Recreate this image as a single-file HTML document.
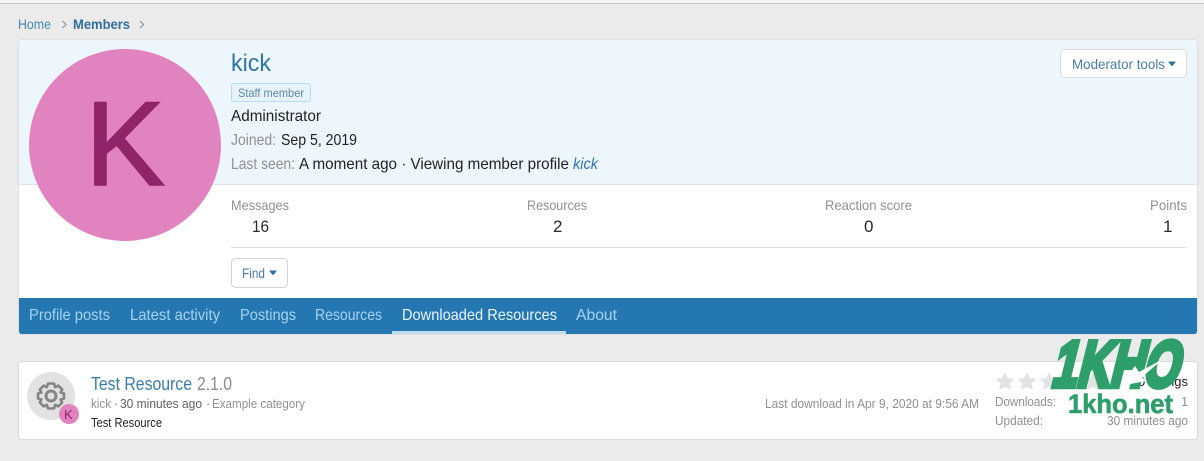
<!DOCTYPE html>
<html lang="en"><head><meta charset="utf-8"><title>kick</title>
<style>
html,body{margin:0;padding:0;width:1204px;height:461px;overflow:hidden;background:#ebebeb}
svg{display:block}
text{font-family:"Liberation Sans",sans-serif;white-space:pre}
</style></head><body>
<svg width="1204" height="461" viewBox="0 0 1204 461" xmlns="http://www.w3.org/2000/svg">
<rect width="1204" height="461" fill="#ebebeb"/>
<rect width="1204" height="3" fill="#f4f4f4"/>
<rect y="3" width="1204" height="1" fill="#c8c8c8"/>

<g font-size="14" fill="#2b709f">
<text x="18" y="29" textLength="33" lengthAdjust="spacingAndGlyphs" fill="#4a86ad">Home</text>
<path d="M62.500 21l3.500 3.500-3.500 3.500M140 21l3.500 3.500-3.500 3.500" fill="none" stroke="#8a9299" stroke-width="1.200"/>
<text x="73" y="29" textLength="57" lengthAdjust="spacingAndGlyphs" font-weight="bold" fill="#2f6f9e">Members</text>
</g>

<rect x="18.500" y="39.500" width="1179" height="295" rx="3" fill="#fff" stroke="#dfdfdf"/>
<path d="M19 184V43q0-3 3-3H1194q3 0 3 3V184Z" fill="#edf6fd"/>
<rect x="19" y="184" width="1178" height="1" fill="#dfe3e6"/>

<circle cx="125" cy="145" r="96" fill="#e083be"/>
<text x="85" y="185" font-size="120" textLength="80" lengthAdjust="spacingAndGlyphs" fill="#8f2468" stroke="#8f2468" stroke-width="1.500">K</text>

<text x="231" y="71" font-size="24" textLength="40" lengthAdjust="spacingAndGlyphs" fill="#2f77a8">kick</text>
<rect x="231.500" y="83.500" width="79" height="18" rx="2" fill="#e6f3fb" stroke="#b5dcf0"/>
<text x="238" y="97" font-size="12" textLength="66" lengthAdjust="spacingAndGlyphs" fill="#5a88a5">Staff member</text>
<g font-size="16" fill="#222">
<text x="231" y="121" textLength="90" lengthAdjust="spacingAndGlyphs">Administrator</text>
<text x="231" y="145" textLength="45" lengthAdjust="spacingAndGlyphs" fill="#909090">Joined:</text>
<text x="281" y="145" textLength="76" lengthAdjust="spacingAndGlyphs">Sep 5, 2019</text>
<text x="231" y="169" textLength="64" lengthAdjust="spacingAndGlyphs" fill="#909090">Last seen:</text>
<text x="299" y="169" textLength="270" lengthAdjust="spacingAndGlyphs">A moment ago · Viewing member profile</text>
<text x="573" y="169" textLength="25" lengthAdjust="spacingAndGlyphs" font-style="italic" fill="#2b75a8">kick</text>
</g>

<rect x="1060.500" y="49.500" width="126" height="28" rx="4" fill="#fff" stroke="#dcdcdc"/>
<text x="1072" y="69" font-size="14" textLength="93" lengthAdjust="spacingAndGlyphs" fill="#4a7da3">Moderator tools</text>
<path d="M1169 62h6l-3 3.500z" fill="#2b709f" stroke="#2b709f" stroke-linejoin="round"/>

<g font-size="14" fill="#909090">
<text x="231" y="210" textLength="58" lengthAdjust="spacingAndGlyphs">Messages</text>
<text x="527" y="210" textLength="60" lengthAdjust="spacingAndGlyphs">Resources</text>
<text x="825" y="210" textLength="87" lengthAdjust="spacingAndGlyphs">Reaction score</text>
<text x="1150" y="210" textLength="37" lengthAdjust="spacingAndGlyphs">Points</text>
</g>
<g font-size="17" fill="#2a2a2a">
<text x="252" y="232" textLength="17" lengthAdjust="spacingAndGlyphs">16</text>
<text x="553" y="232">2</text>
<text x="864" y="232">0</text>
<text x="1163" y="232">1</text>
</g>
<rect x="231" y="247" width="956" height="1" fill="#e0e0e0"/>

<rect x="231.500" y="258.500" width="56" height="29" rx="4" fill="#fff" stroke="#d4d4d4"/>
<text x="242" y="278" font-size="14" textLength="23" lengthAdjust="spacingAndGlyphs" fill="#4a7da3">Find</text>
<path d="M270 271h6l-3 3.500z" fill="#2b709f" stroke="#2b709f" stroke-linejoin="round"/>

<path d="M19 298H1197V331q0 3-3 3H22q-3 0-3-3Z" fill="#2577b1"/>
<g font-size="16" fill="#a6d3f2">
<text x="29" y="320" textLength="81" lengthAdjust="spacingAndGlyphs">Profile posts</text>
<text x="130" y="320" textLength="90" lengthAdjust="spacingAndGlyphs">Latest activity</text>
<text x="240" y="320" textLength="56" lengthAdjust="spacingAndGlyphs">Postings</text>
<text x="315" y="320" textLength="67" lengthAdjust="spacingAndGlyphs">Resources</text>
<text x="402" y="320" textLength="155" lengthAdjust="spacingAndGlyphs" fill="#e8f4fc">Downloaded Resources</text>
<text x="576" y="320" textLength="41" lengthAdjust="spacingAndGlyphs">About</text>
</g>
<rect x="392" y="331" width="174" height="3" fill="#bcdcf2"/>

<rect x="18.500" y="361.500" width="1179" height="78" rx="3" fill="#fff" stroke="#dadada"/>
<circle cx="51" cy="396" r="24" fill="#e2e2e2"/>
<g transform="translate(51 396)" fill="none" stroke="#858585">
<circle r="5" stroke-width="3"/>
<path stroke-width="2.600" stroke-linejoin="round" d="M-3-12.500H3L4.200-8.800 7.200-10.400 11.200-6.400 9.600-3.500 13-2.500V2.500L9.600 3.500 11.200 6.400 7.200 10.400 4.200 8.800 3 12.500H-3L-4.200 8.800-7.200 10.400-11.200 6.400-9.600 3.500-13 2.500V-2.500L-9.600-3.500-11.200-6.400-7.200-10.400-4.200-8.800Z"/>
</g>
<circle cx="69" cy="414" r="10" fill="#e083be"/>
<text x="64" y="419" font-size="13" fill="#8f2468">K</text>

<text x="91" y="390" font-size="18" textLength="101" lengthAdjust="spacingAndGlyphs" fill="#3a7da8">Test Resource</text>
<text x="197" y="390" font-size="18" textLength="35" lengthAdjust="spacingAndGlyphs" fill="#8c8c8c">2.1.0</text>
<g font-size="13" fill="#909090">
<text x="91" y="408" textLength="20" lengthAdjust="spacingAndGlyphs">kick</text>
<text x="114" y="408">·</text>
<text x="120" y="408" textLength="82" lengthAdjust="spacingAndGlyphs" fill="#606060">30 minutes ago</text>
<text x="206" y="408">·</text>
<text x="212" y="408" textLength="93" lengthAdjust="spacingAndGlyphs">Example category</text>
<text x="765" y="408" textLength="214" lengthAdjust="spacingAndGlyphs">Last download in Apr 9, 2020 at 9:56 AM</text>
</g>
<text x="91" y="427" font-size="13" textLength="71" lengthAdjust="spacingAndGlyphs" fill="#222">Test Resource</text>

<g fill="#e2e2e2">
<path d="M1005 372l2.800 6.200 6.700.7-5 4.500 1.400 6.600-5.900-3.400-5.900 3.400 1.400-6.600-5-4.500 6.700-.7z"/>
<path d="M1027 372l2.800 6.200 6.700.7-5 4.500 1.400 6.600-5.900-3.400-5.900 3.400 1.400-6.600-5-4.500 6.700-.7z"/>
<path d="M1049 372l2.800 6.200 6.700.7-5 4.500 1.400 6.600-5.900-3.400-5.900 3.400 1.400-6.600-5-4.500 6.700-.7z"/>
<path d="M1071 372l2.800 6.200 6.700.7-5 4.500 1.400 6.600-5.900-3.400-5.900 3.400 1.400-6.600-5-4.500 6.700-.7z"/>
<path d="M1093 372l2.800 6.200 6.700.7-5 4.500 1.400 6.600-5.900-3.400-5.900 3.400 1.400-6.600-5-4.500 6.700-.7z"/>
</g>
<text x="1138" y="386" font-size="13" textLength="50" lengthAdjust="spacingAndGlyphs" fill="#222">0 ratings</text>
<g font-size="13" fill="#909090">
<text x="995" y="406" textLength="61" lengthAdjust="spacingAndGlyphs">Downloads:</text>
<text x="1181" y="406">1</text>
<text x="995" y="425" textLength="48" lengthAdjust="spacingAndGlyphs">Updated:</text>
<text x="1107" y="425" textLength="81" lengthAdjust="spacingAndGlyphs">30 minutes ago</text>
</g>

<g transform="translate(1050 386.500) skewX(-14)">
<text x="0" y="0" font-size="65" font-weight="bold" textLength="127" lengthAdjust="spacingAndGlyphs" fill="#2e9e6b" stroke="#2e9e6b" stroke-width="5.500" stroke-linejoin="miter">1KHO</text>
</g>
<path d="M1163 359L1139 372 1135 366 1120 386 1146 381 1142 377Z" fill="#fff"/>
<text x="1068" y="413" font-size="27" font-weight="bold" textLength="105" lengthAdjust="spacingAndGlyphs" fill="#2e9e6b" stroke="#2e9e6b" stroke-width=".6">1kho.net</text>
</svg>
</body></html>
